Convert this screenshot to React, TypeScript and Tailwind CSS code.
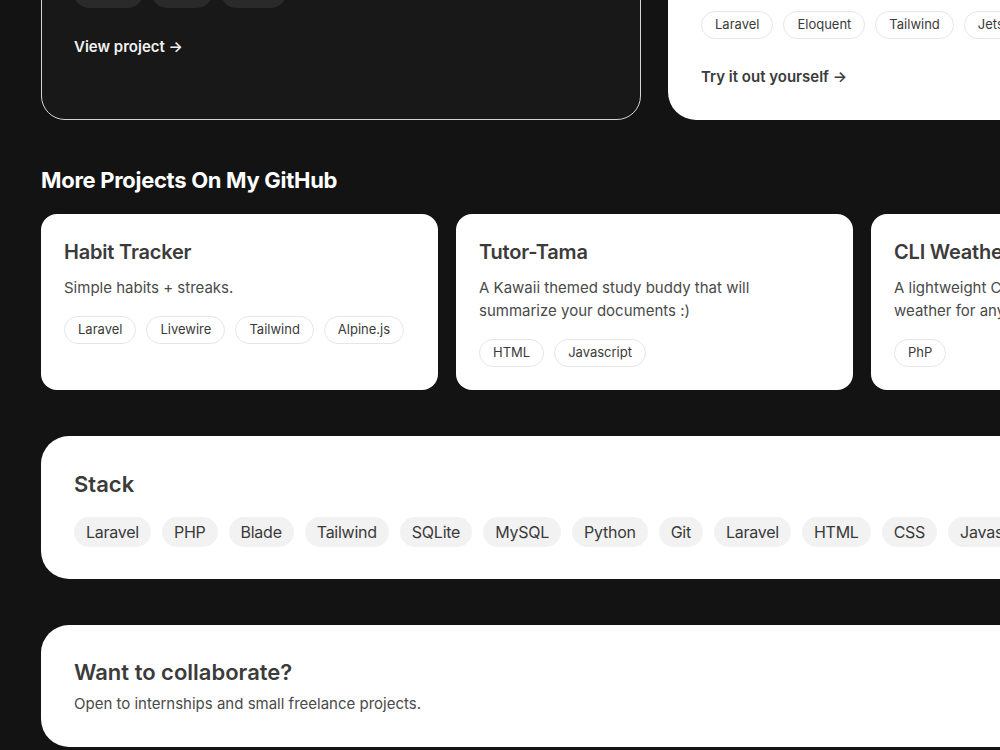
import React from 'react';

type Project = {
  title: string;
  description: string;
  tags: string[];
};

const projects: Project[] = [
  {
    title: 'Habit Tracker',
    description: 'Simple habits + streaks.',
    tags: ['Laravel', 'Livewire', 'Tailwind', 'Alpine.js'],
  },
  {
    title: 'Tutor-Tama',
    description: 'A Kawaii themed study buddy that will summarize your documents :)',
    tags: ['HTML', 'Javascript'],
  },
  {
    title: 'CLI Weather App',
    description: 'A lightweight CLI app that shows the current weather for any city.',
    tags: ['PhP'],
  },
];

const stack = [
  'Laravel',
  'PHP',
  'Blade',
  'Tailwind',
  'SQLite',
  'MySQL',
  'Python',
  'Git',
  'Laravel',
  'HTML',
  'CSS',
  'Javascript',
];

function OutlineTag({ label }: { label: string }) {
  return (
    <span className="inline-flex h-[28px] items-center rounded-full border border-[#e6e6e6] px-[13px] text-[13px] text-[#3a3a3a]">
      {label}
    </span>
  );
}

function ProjectCard({ project }: { project: Project }) {
  return (
    <div className="h-[176px] w-[397px] shrink-0 rounded-2xl bg-white px-[23px] pt-[24px]">
      <h3 className="text-[20px] leading-[28px] font-semibold tracking-[-0.2px] text-[#3b3b3b]">{project.title}</h3>
      <p className="mt-[10px] text-[15px] leading-[23px] text-[#4a4a4a]">{project.description}</p>
      <div className="mt-[17px] flex gap-[10px]">
        {project.tags.map((tag) => (
          <OutlineTag key={tag} label={tag} />
        ))}
      </div>
    </div>
  );
}

export default function App() {
  return (
    <div
      className="h-[750px] w-[1000px] overflow-hidden bg-[#131313]"
      style={{ fontFamily: 'Inter, "Noto Sans", sans-serif' }}
    >
      <div className="w-[1500px] pl-[41px]">
        {/* featured projects, scrolled past the top */}
        <div className="flex h-[120px] items-end overflow-hidden">
          <div className="flex items-end gap-[27px]">
            <div className="w-[600px] rounded-[24px] border border-[#d4d4d4] bg-[#181818] px-[32px] pb-[62px] pt-[40px]">
              <h3 className="text-[22px] font-semibold text-white">Inventory Manager</h3>
              <p className="mt-2 text-[15px] text-[#bdbdbd]">Stock, suppliers and orders in one place.</p>
              <div className="mt-5 flex gap-[9px]">
                {['Laravel', 'Blade', 'SQLite'].map((tag) => (
                  <span
                    key={tag}
                    className="inline-flex h-[30px] items-center rounded-full bg-[#2a2a2a] px-[13px] text-[13px] tracking-[-0.2px] text-white"
                  >
                    {tag}
                  </span>
                ))}
              </div>
              <a className="mt-[29px] block text-[15px] leading-[20px] font-semibold text-[#f2f2f2]">View project →</a>
            </div>

            <div className="w-[700px] rounded-bl-[28px] bg-white px-[33px] pb-[33px] pt-[40px]">
              <h3 className="text-[22px] font-semibold text-[#3b3b3b]">Live Demo</h3>
              <p className="mt-2 text-[15px] text-[#4a4a4a]">A full CRUD app you can play with.</p>
              <div className="mt-[14px] flex gap-[10px]">
                {['Laravel', 'Eloquent', 'Tailwind', 'Jetstream'].map((tag) => (
                  <OutlineTag key={tag} label={tag} />
                ))}
              </div>
              <a className="mt-[28px] block text-[15px] leading-[20px] font-semibold text-[#3b3b3b]">
                Try it out yourself →
              </a>
            </div>
          </div>
        </div>

        <h2 className="mt-[46px] text-[22px] leading-[28px] font-bold tracking-[-0.3px] text-white">
          More Projects On My GitHub
        </h2>
        <div className="mt-[20px] flex gap-[18px]">
          {projects.map((p) => (
            <ProjectCard key={p.title} project={p} />
          ))}
        </div>

        <div className="mt-[46px] h-[143px] rounded-l-[28px] bg-white pl-[33px] pt-[34px]">
          <h2 className="text-[22px] leading-[28px] font-semibold text-[#3b3b3b]">Stack</h2>
          <div className="mt-[19px] flex gap-[11px]">
            {stack.map((item, i) => (
              <span
                key={i}
                className="inline-flex h-[30px] items-center rounded-full bg-[#f2f2f2] px-[12px] text-[16px] tracking-[-0.25px] text-[#3a3a3a]"
              >
                {item}
              </span>
            ))}
          </div>
        </div>

        <div className="mt-[46px] h-[122px] rounded-l-[28px] bg-white pl-[33px] pt-[33px]">
          <h2 className="text-[22px] leading-[28px] font-semibold text-[#3b3b3b]">Want to collaborate?</h2>
          <p className="mt-[7px] text-[15px] leading-[22px] text-[#4a4a4a]">
            Open to internships and small freelance projects.
          </p>
        </div>
      </div>
    </div>
  );
}
